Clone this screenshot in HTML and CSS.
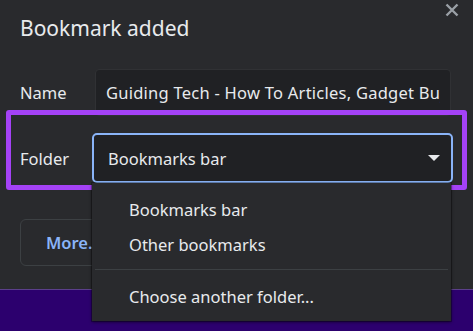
FILE: index.html
```html
<!DOCTYPE html>
<html lang="en">
<head>
  <meta charset="UTF-8">
  <meta name="viewport" content="width=device-width, initial-scale=1.0">
  <title>Bookmark added</title>
  <link rel="stylesheet" href="styles.css">
</head>

<body>
  <div class="dialog">
    <h1 class="title">Bookmark added</h1>
    <button class="close" aria-label="Close">
      <svg width="14" height="14" viewBox="0 0 14 14">
        <path d="M1.5 1.5 L12.5 12.5 M12.5 1.5 L1.5 12.5" stroke="#9aa0a6" stroke-width="2.4" fill="none"/>
      </svg>
    </button>

    <div class="row">
      <span class="label">Name</span>
      <div class="name-input"><span class="name-text">Guiding Tech - How To Articles, Gadget Buying Guides, and Reviews</span></div>
    </div>

    <div class="row folder-row">
      <span class="label">Folder</span>
      <div class="select">
        <span>Bookmarks bar</span>
        <svg class="caret" width="12" height="7" viewBox="0 0 12 7">
          <path d="M0 0 L12 0 L6 6 Z" fill="#e8eaed"/>
        </svg>

        <div class="menu">
          <div class="menu-item">Bookmarks bar</div>
          <div class="menu-item">Other bookmarks</div>
          <div class="menu-sep"></div>
          <div class="menu-item">Choose another folder...</div>
        </div>
      </div>
    </div>

    <div class="actions">
      <button class="more">More...</button>
    </div>

    <!-- annotation box around the folder row -->
    <div class="highlight"></div>
  </div>
</body>
</html>
```

FILE: styles.css
```css
body {
  margin: 0;
  height: 331px;
  background: #2c006e;
  font-family: 'Noto Sans', 'Open Sans', sans-serif;
  color: #e8eaed;
  overflow: hidden;
}

.dialog {
  position: relative;
  height: 290px;
  box-sizing: border-box;
  padding: 14px 20px 0 20px;
  background: #292a2d;
  border-bottom: 1px solid #5b3f8a;
}

.title {
  margin: 0;
  font-size: 21px;
  font-weight: 400;
  line-height: 28px;
  color: #e8eaed;
}

.close {
  position: absolute;
  top: 3px;
  right: 14px;
  padding: 0;
  border: none;
  background: none;
  width: 14px;
  height: 14px;
}

.row {
  display: flex;
  align-items: center;
  margin-top: 27px;
  font-size: 16.5px;
}

.label {
  width: 75px;
  flex-shrink: 0;
}

.name-input {
  width: 356px;
  height: 47px;
  box-sizing: border-box;
  padding: 0 10px;
  background: #202124;
  border: 1px solid #303134;
  border-radius: 4px;
}

.name-text {
  display: block;
  line-height: 45px;
  letter-spacing: 0.25px;
  white-space: nowrap;
  overflow: hidden;
}

.folder-row {
  margin-top: 17px;
}

.folder-row .label {
  width: 72px;
}

.select {
  position: relative;
  width: 361px;
  height: 50px;
  box-sizing: border-box;
  padding: 0 11px 0 14px;
  display: flex;
  align-items: center;
  justify-content: space-between;
  background: #202124;
  border: 2px solid #8ab4f8;
  border-radius: 5px;
}

.menu {
  position: absolute;
  top: 48px;
  left: -2px;
  width: 359px;
  height: 138px;
  box-sizing: border-box;
  padding-top: 9px;
  background: #292a2d;
  box-shadow: 0 1px 3px rgba(0, 0, 0, 0.6), 0 0 0 1px rgba(0, 0, 0, 0.25);
  z-index: 2;
}

.menu-item {
  height: 35px;
  line-height: 35px;
  padding-left: 37px;
  font-size: 16.5px;
}

.menu-sep {
  height: 1px;
  margin: 7px 3px 9px 3px;
  background: #3c4043;
}

.actions {
  margin-top: 36px;
}

.more {
  width: 120px;
  height: 47px;
  padding: 0 0 0 25px;
  text-align: left;
  font-family: inherit;
  font-size: 16.5px;
  font-weight: 600;
  color: #8ab4f8;
  background: transparent;
  border: 1px solid #3c4043;
  border-radius: 6px;
}

.highlight {
  position: absolute;
  left: 6px;
  top: 110px;
  width: 461px;
  height: 80px;
  box-sizing: border-box;
  border: 5px solid #a442f6;
  border-radius: 3px;
  z-index: 1;
}
```
